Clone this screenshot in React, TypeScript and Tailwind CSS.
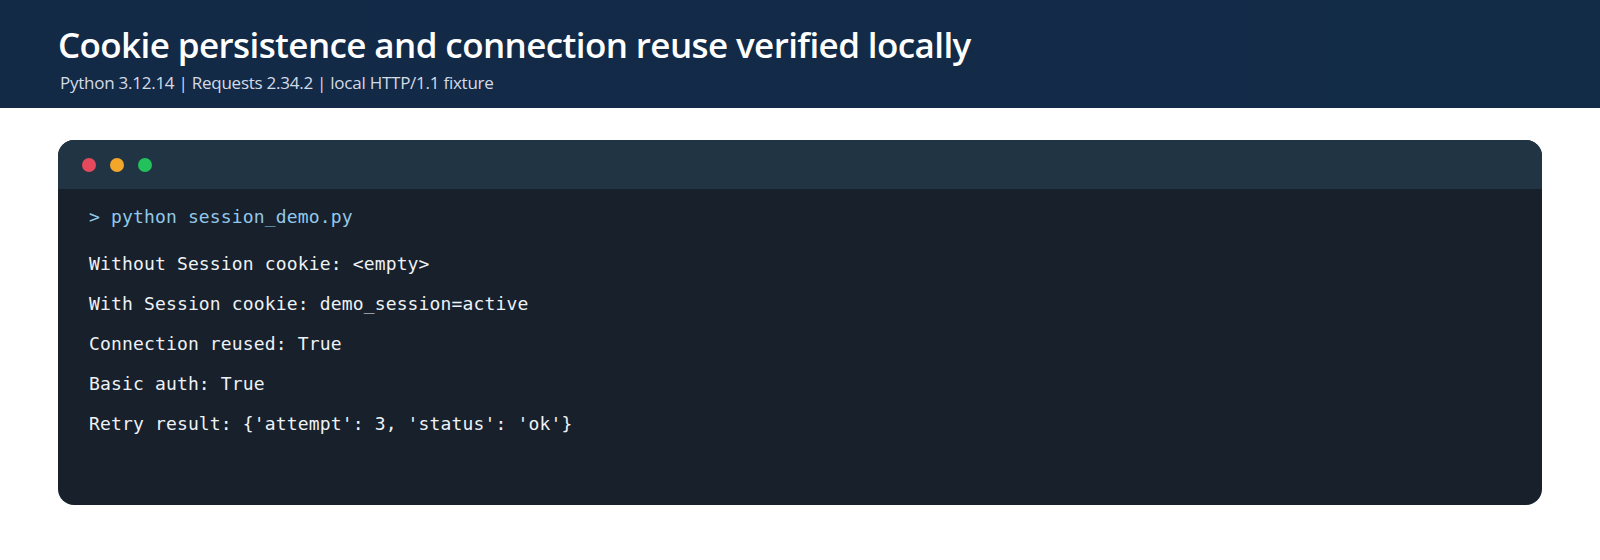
import React from "react";

const lines = [
  "Without Session cookie: <empty>",
  "With Session cookie: demo_session=active",
  "Connection reused: True",
  "Basic auth: True",
  "Retry result: {'attempt': 3, 'status': 'ok'}",
];

export default function App() {
  return (
    <div className="w-[1600px] h-[560px] bg-white overflow-hidden" style={{ fontFamily: '"Open Sans", "Noto Sans", sans-serif' }}>
      <header className="h-[108px] bg-gradient-to-r from-[#132a47] to-[#122b47] pl-[58px] pt-[23px]">
        <h1 className="text-[35px] leading-[44px] font-semibold text-white tracking-[-0.6px]">
          Cookie persistence and connection reuse verified locally
        </h1>
        <p className="mt-[5px] text-[17px] leading-[22px] text-[#d3dbe6] pl-[2px] tracking-[-0.25px]">
          Python 3.12.14 | Requests 2.34.2 | local HTTP/1.1 fixture
        </p>
      </header>
      <div className="px-[58px] pt-[32px]">
        <div className="w-[1484px] h-[365px] rounded-[16px] overflow-hidden bg-[#17202b]">
          <div className="h-[49px] bg-[#213444] flex items-center gap-[14px] pl-[24px]">
            <span className="w-[14px] h-[14px] rounded-full bg-[#e5495b]" />
            <span className="w-[14px] h-[14px] rounded-full bg-[#f4a62a]" />
            <span className="w-[14px] h-[14px] rounded-full bg-[#22c15c]" />
          </div>
          <div className="pl-[31px] pt-[16px] tracking-[0.15px]" style={{ fontFamily: '"DejaVu Sans Mono", "Liberation Mono", monospace' }}>
            <div className="text-[18px] leading-[24px] text-[#93c8ea]">&gt; python session_demo.py</div>
            <div className="mt-[23px] flex flex-col gap-[16px]">
              {lines.map((l) => (
                <div key={l} className="text-[18px] leading-[24px] text-[#eef2f6]">
                  {l}
                </div>
              ))}
            </div>
          </div>
        </div>
      </div>
    </div>
  );
}
